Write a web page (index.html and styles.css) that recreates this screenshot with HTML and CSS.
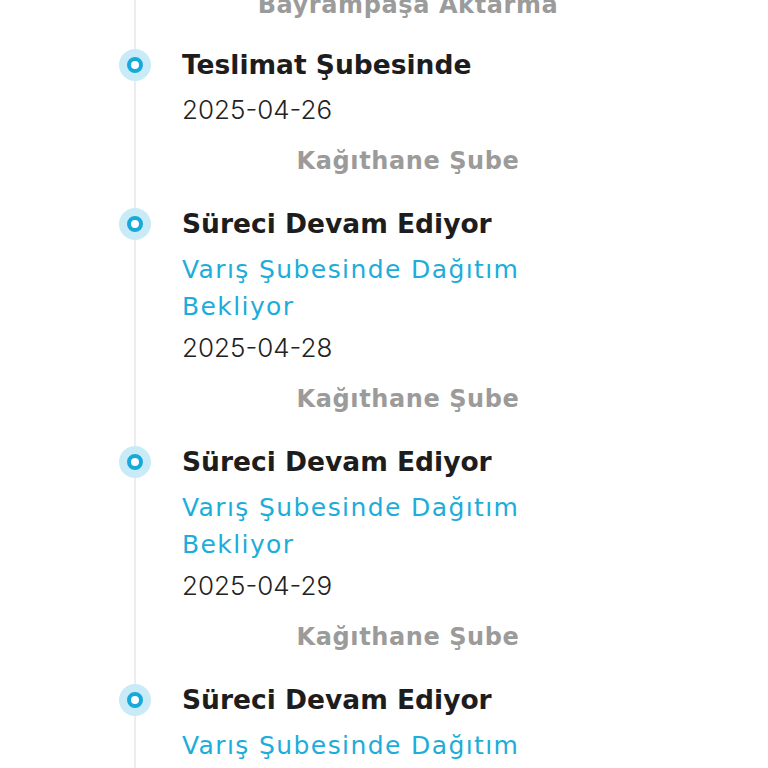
FILE: index.html
```html
<!DOCTYPE html>
<html lang="tr">
<head>
  <meta charset="UTF-8" />
  <meta name="viewport" content="width=device-width, initial-scale=1.0"/>
  <title>Kargo Takip</title>
  <link rel="stylesheet" href="styles.css">
</head>
<body>

  <!-- Shipment history -->
  <div class="timeline">

    <div class="step step-cut">
      <div class="step-body">
        <div class="step-place">Bayrampaşa Aktarma</div>
      </div>
    </div>

    <div class="step">
      <span class="dot"></span>
      <div class="step-body">
        <div class="step-title">Teslimat Şubesinde</div>
        <div class="step-date">2025-04-26</div>
        <div class="step-place">Kağıthane Şube</div>
      </div>
    </div>

    <div class="step">
      <span class="dot"></span>
      <div class="step-body">
        <div class="step-title">Süreci Devam Ediyor</div>
        <div class="step-note">Varış Şubesinde Dağıtım Bekliyor</div>
        <div class="step-date">2025-04-28</div>
        <div class="step-place">Kağıthane Şube</div>
      </div>
    </div>

    <div class="step">
      <span class="dot"></span>
      <div class="step-body">
        <div class="step-title">Süreci Devam Ediyor</div>
        <div class="step-note">Varış Şubesinde Dağıtım Bekliyor</div>
        <div class="step-date">2025-04-29</div>
        <div class="step-place">Kağıthane Şube</div>
      </div>
    </div>

    <div class="step">
      <span class="dot"></span>
      <div class="step-body">
        <div class="step-title">Süreci Devam Ediyor</div>
        <div class="step-note">Varış Şubesinde Dağıtım Bekliyor</div>
        <div class="step-date">2025-04-30</div>
        <div class="step-place">Kağıthane Şube</div>
      </div>
    </div>

  </div>

</body>
</html>
```
FILE: styles.css
```css
body {
  margin: 0;
  background-color: #ffffff;
  font-family: 'DejaVu Sans', sans-serif;
  overflow: hidden;
}

.timeline {
  margin-left: 134px;
  border-left: 2px solid #ededed;
  padding-left: 46px;
  min-height: 800px;
}

.step {
  display: flex;
  align-items: flex-start;
  margin-bottom: 27px;
}

.step-cut {
  margin-top: -13px;
  margin-bottom: 24px;
}

.dot {
  flex: none;
  width: 32px;
  height: 32px;
  margin: 2px 0 0 -63px;
  margin-right: 31px;
  border-radius: 50%;
  background-color: #c9ebf7;
  display: flex;
  align-items: center;
  justify-content: center;
}

.dot::after {
  content: '';
  width: 8px;
  height: 8px;
  border: 4px solid #17a9d9;
  border-radius: 50%;
  background-color: #ffffff;
}

.step-body {
  width: 452px;
}

.step-title {
  font-size: 26.5px;
  font-weight: bold;
  line-height: 36px;
  color: #1d1d1d;
  margin-bottom: 9px;
}

.step-note {
  font-size: 25px;
  letter-spacing: 1.4px;
  line-height: 37px;
  color: #1cadda;
  margin-top: 4px;
  margin-bottom: 5px;
}

.step-date {
  font-family: 'Inter', sans-serif;
  font-size: 26px;
  font-weight: 300;
  line-height: 36px;
  color: #222222;
}

.step-place {
  font-size: 24px;
  font-weight: bold;
  letter-spacing: 0.6px;
  line-height: 36px;
  color: #9b9b9b;
  text-align: center;
  margin-top: 15px;
}

.step-cut .step-place {
  margin-top: 0;
}
```
